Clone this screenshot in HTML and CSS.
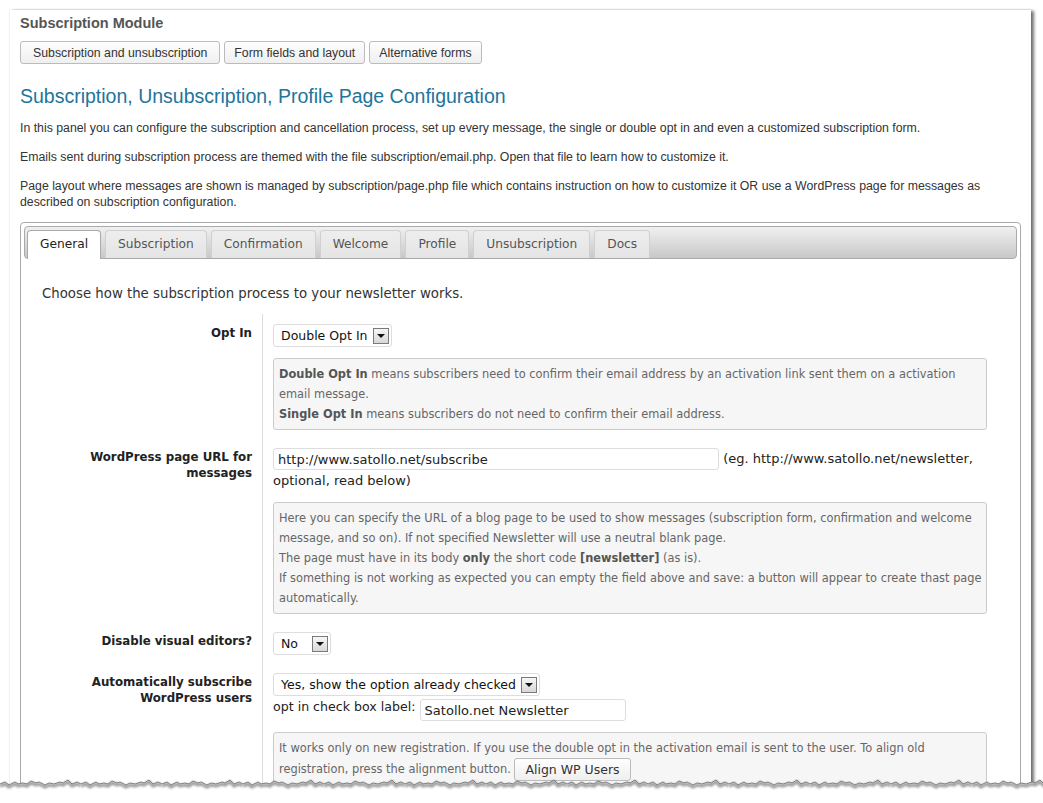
FILE: index.html
```html
<!DOCTYPE html>
<html lang="en">
<head>
    <meta charset="UTF-8">
    <meta name="viewport" content="width=device-width, initial-scale=1.0">
    <title>Subscription Module</title>
    <link rel="stylesheet" href="styles.css">
</head>
<body>
    <div class="frame">
        <div class="sheet">
            <h3 class="module-title">Subscription Module</h3>
            <div class="subnav">
                <button>Subscription and unsubscription</button>
                <button>Form fields and layout</button>
                <button>Alternative forms</button>
            </div>

            <h2>Subscription, Unsubscription, Profile Page Configuration</h2>
            <p>In this panel you can configure the subscription and cancellation process, set up every message, the single or double opt in and even a customized subscription form.</p>
            <p>Emails sent during subscription process are themed with the file subscription/email.php. Open that file to learn how to customize it.</p>
            <p>Page layout where messages are shown is managed by subscription/page.php file which contains instruction on how to customize it OR use a WordPress page for messages as described on subscription configuration.</p>

            <div class="tabs">
                <ul class="tab-nav">
                    <li class="active">General</li>
                    <li>Subscription</li>
                    <li>Confirmation</li>
                    <li>Welcome</li>
                    <li>Profile</li>
                    <li>Unsubscription</li>
                    <li>Docs</li>
                </ul>
                <div class="tab-panel">
                    <p class="intro">Choose how the subscription process to your newsletter works.</p>
                    <table class="form-table">
                        <tr>
                            <th>Opt In</th>
                            <td>
                                <span class="select">Double Opt In<span class="arrow"></span></span>
                                <div class="hints">
                                    <b>Double Opt In</b> means subscribers need to confirm their email address by an activation link sent them on a activation email message.<br>
                                    <b>Single Opt In</b> means subscribers do not need to confirm their email address.
                                </div>
                            </td>
                        </tr>
                        <tr>
                            <th>WordPress page URL for messages</th>
                            <td>
                                <input type="text" class="url-field" value="http://www.satollo.net/subscribe"> (eg. http://www.satollo.net/newsletter, optional, read below)
                                <div class="hints">
                                    Here you can specify the URL of a blog page to be used to show messages (subscription form, confirmation and welcome message, and so on). If not specified Newsletter will use a neutral blank page.<br>
                                    The page must have in its body <b>only</b> the short code <b>[newsletter]</b> (as is).<br>
                                    If something is not working as expected you can empty the field above and save: a button will appear to create thast page automatically.
                                </div>
                            </td>
                        </tr>
                        <tr>
                            <th>Disable visual editors?</th>
                            <td>
                                <span class="select short">No<span class="arrow"></span></span>
                            </td>
                        </tr>
                        <tr>
                            <th>Automatically subscribe WordPress users</th>
                            <td>
                                <span class="select">Yes, show the option already checked<span class="arrow"></span></span><br>
                                <span class="field-label">opt in check box label:</span> <input type="text" class="label-field" value="Satollo.net Newsletter">
                                <div class="hints">
                                    It works only on new registration. If you use the double opt in the activation email is sent to the user. To align old registration, press the alignment button. <button class="small-btn">Align WP Users</button>
                                </div>
                            </td>
                        </tr>
                    </table>
                </div>
            </div>
        </div>

        <svg class="torn" width="1043" height="31" viewBox="0 0 1043 31">
            <defs>
                <filter id="soft" x="-10%" y="-50%" width="120%" height="200%">
                    <feGaussianBlur stdDeviation="1.2"/>
                </filter>
                <pattern id="edge" patternUnits="userSpaceOnUse" width="81" height="31">
                    <path d="M0,10 L5,8 L9,11 L15,8 L18,10 L23,9 L27,10 L31,7 L36,9 L39,8 L45,11 L49,9 L54,10 L60,8 L63,9 L68,6 L72,10 L77,8 L81,10 L81,31 L0,31 Z" fill="#fff"/>
                    <path d="M0,12 L5,10 L9,13 L15,10 L18,12 L23,11 L27,12 L31,9 L36,11 L39,10 L45,13 L49,11 L54,12 L60,10 L63,11 L68,8 L72,12 L77,10 L81,12" fill="none" stroke="rgba(0,0,0,0.4)" stroke-width="3" filter="url(#soft)"/>
                    <path d="M0,10 L5,8 L9,11 L15,8 L18,10 L23,9 L27,10 L31,7 L36,9 L39,8 L45,11 L49,9 L54,10 L60,8 L63,9 L68,6 L72,10 L77,8 L81,10" fill="none" stroke="#808080" stroke-width="1"/>
                </pattern>
            </defs>
            <rect x="0" y="0" width="1043" height="31" fill="url(#edge)"/>
        </svg>
    </div>
</body>
</html>
```

FILE: styles.css
```css
body {
    margin: 0;
    background: #fff;
}
.frame {
    position: relative;
    height: 803px;
    overflow: hidden;
}
.sheet {
    margin: 10px 0 0 10px;
    width: 1021px;
    height: 780px;
    box-sizing: border-box;
    padding: 4px 10px 0;
    overflow: hidden;
    background: #fff;
    box-shadow: 3px 1px 3px rgba(0, 0, 0, 0.55), 0 0 2px rgba(0, 0, 0, 0.15);
    font-family: "Liberation Sans", Arial, sans-serif;
    font-size: 12.3px;
    color: #333;
}
.module-title {
    margin: 0;
    font-size: 14.5px;
    line-height: 18px;
    font-weight: bold;
    color: #555;
}
.subnav {
    display: flex;
    gap: 4px;
    margin-top: 9px;
}
.subnav button {
    height: 23px;
    padding: 0 9px;
    border: 1px solid #bbb;
    border-radius: 3px;
    background: linear-gradient(#fefefe, #efefef);
    font-family: "Liberation Sans", Arial, sans-serif;
    font-size: 12.3px;
    color: #333;
}
.subnav button:first-child {
    padding: 0 12px;
}
h2 {
    margin: 20px 0 0;
    font-size: 19.5px;
    line-height: 24px;
    font-weight: normal;
    color: #21759b;
}
p {
    margin: 12px 0 0;
    line-height: 16px;
}
p + p {
    margin-top: 13px;
}
.tabs {
    margin-top: 12px;
    border: 1px solid #aaa;
    border-radius: 4px;
    padding: 3px;
    font-family: "DejaVu Sans", Verdana, sans-serif;
}
.tab-nav {
    display: flex;
    gap: 4px;
    margin: 0;
    padding: 3px 2px 0;
    list-style: none;
    border: 1px solid #aaa;
    border-radius: 4px;
    background: linear-gradient(#f0f0f0, #c8c8c8);
}
.tab-nav li {
    height: 27px;
    margin-bottom: -1px;
    padding: 0 12px;
    border: 1px solid #d0d0d0;
    border-bottom: 0;
    border-radius: 4px 4px 0 0;
    background: linear-gradient(#eeeeee, #e4e4e4);
    font-size: 12.2px;
    line-height: 27px;
    color: #555;
}
.tab-nav li.active {
    height: 28px;
    border-color: #aaa;
    background: #fff;
    color: #222;
}
.tab-panel {
    padding: 14px 18px 0;
}
.intro {
    margin: 12px 0 11px;
    font-size: 13.3px;
    line-height: 18px;
    color: #333;
}
.form-table {
    width: 100%;
    border-collapse: collapse;
}
.form-table th {
    width: 210px;
    padding: 11px 10px 8px 0;
    border-right: 1px solid #ddd;
    text-align: right;
    vertical-align: top;
    font-size: 11.8px;
    line-height: 16px;
    font-weight: bold;
    color: #222;
}
.form-table td {
    padding: 10px 12px 8px 10px;
    vertical-align: top;
    font-size: 13px;
    line-height: 21px;
    color: #222;
}
.field-label {
    font-size: 12.6px;
}
.select {
    display: inline-flex;
    align-items: center;
    gap: 5px;
    height: 23px;
    box-sizing: border-box;
    padding: 0 2px 0 7px;
    border: 1px solid #ddd;
    border-radius: 3px;
    background: #fff;
    font-size: 12.5px;
    vertical-align: top;
    color: #111;
}
.select.short {
    width: 58px;
}
.select .arrow {
    position: relative;
    width: 16px;
    height: 16px;
    margin-left: auto;
    box-sizing: border-box;
    border: 1px solid #7a7a7a;
    background: linear-gradient(#f6f6f6, #d8d8d8);
}
.select .arrow::after {
    content: "";
    position: absolute;
    left: 3px;
    top: 5px;
    border-left: 4px solid transparent;
    border-right: 4px solid transparent;
    border-top: 4px solid #111;
}
input[type="text"] {
    height: 22px;
    box-sizing: border-box;
    padding: 0 4px;
    border: 1px solid #ddd;
    border-radius: 3px;
    font-family: "DejaVu Sans", Verdana, sans-serif;
    font-size: 13px;
    color: #222;
    vertical-align: top;
}
.url-field {
    width: 446px;
}
.label-field {
    width: 206px;
    margin-top: 3px;
}
.hints {
    margin-top: 11px;
    padding: 5px 1px 5px 5px;
    border: 1px solid #ccc;
    border-radius: 3px;
    background: #f6f6f6;
    font-size: 11.4px;
    line-height: 20px;
    color: #666;
}
.hints b {
    color: #555;
}
.small-btn {
    height: 23px;
    padding: 0 10px;
    border: 1px solid #bbb;
    border-radius: 3px;
    background: linear-gradient(#fefefe, #efefef);
    font-family: "DejaVu Sans", Verdana, sans-serif;
    font-size: 12.5px;
    color: #333;
    vertical-align: middle;
}
.torn {
    position: absolute;
    left: 0;
    top: 774px;
}
```
